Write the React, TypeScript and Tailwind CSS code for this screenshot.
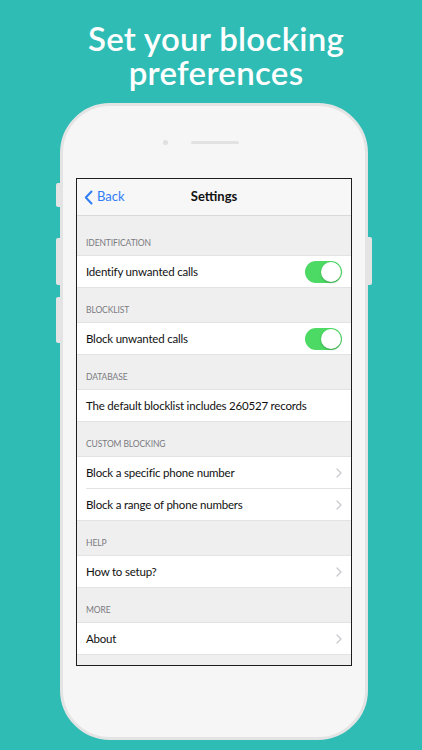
import React from 'react';

type Row = { label: string; kind: 'toggle' | 'link' | 'text' };
type Section = { title: string; rows: Row[] };

const sections: Section[] = [
  { title: 'IDENTIFICATION', rows: [{ label: 'Identify unwanted calls', kind: 'toggle' }] },
  { title: 'BLOCKLIST', rows: [{ label: 'Block unwanted calls', kind: 'toggle' }] },
  { title: 'DATABASE', rows: [{ label: 'The default blocklist includes 260527 records', kind: 'text' }] },
  {
    title: 'CUSTOM BLOCKING',
    rows: [
      { label: 'Block a specific phone number', kind: 'link' },
      { label: 'Block a range of phone numbers', kind: 'link' },
    ],
  },
  { title: 'HELP', rows: [{ label: 'How to setup?', kind: 'link' }] },
  { title: 'MORE', rows: [{ label: 'About', kind: 'link' }] },
];

const Toggle = () => (
  <div className="w-[37px] h-[22px] rounded-full bg-[#4cd964] relative">
    <div className="absolute right-[1px] top-[1px] w-[20px] h-[20px] rounded-full bg-white shadow-[0_1px_2px_rgba(0,0,0,0.25)]" />
  </div>
);

const Chevron = () => (
  <svg width="6" height="10" viewBox="0 0 6 10" fill="none">
    <path d="M1 1l4 4-4 4" stroke="#c7c7cc" strokeWidth="1.2" strokeLinecap="round" strokeLinejoin="round" />
  </svg>
);

const SettingsRow = ({ row, last }: { row: Row; last: boolean }) => (
  <div className="h-[32px] bg-white flex items-center pl-[9px] pr-[9px] relative">
    <span className="flex-1 text-[11.5px] text-[#111] tracking-[-0.2px]">{row.label}</span>
    {row.kind === 'toggle' && <Toggle />}
    {row.kind === 'link' && <Chevron />}
    <div className={`absolute right-0 bottom-0 h-px bg-[#e3e3e3] ${last ? 'left-0' : 'left-[9px]'}`} />
  </div>
);

export default function App() {
  return (
    <div className="w-[422px] h-[750px] overflow-hidden bg-[#2fbcb5] flex flex-col">
      <h1 className="pt-[21px] pl-[10px] text-center text-white text-[33px] leading-[34px] font-semibold font-['Lato',sans-serif] tracking-[0.3px]">
        Set your blocking
        <br />
        preferences
      </h1>

      <div className="relative mt-[14px] ml-[60px] w-[308px] h-[637px] shrink-0 rounded-[50px] bg-[#f6f6f6] border-[3px] border-[#e4e4e4]">
        {/* side buttons */}
        <div className="absolute left-[-7px] top-[77px] w-[4px] h-[24px] rounded-l-[2px] bg-[#e4e4e4]" />
        <div className="absolute left-[-7px] top-[132px] w-[4px] h-[47px] rounded-l-[2px] bg-[#e4e4e4]" />
        <div className="absolute left-[-7px] top-[191px] w-[4px] h-[46px] rounded-l-[2px] bg-[#e4e4e4]" />
        <div className="absolute right-[-7px] top-[131px] w-[4px] h-[48px] rounded-r-[2px] bg-[#e4e4e4]" />

        {/* camera + speaker */}
        <div className="flex items-center justify-center gap-[23px] pt-[34px] pr-[27px]">
          <div className="w-[5px] h-[5px] rounded-full bg-[#e0e0e0]" />
          <div className="w-[48px] h-[3px] rounded-full bg-[#e2e2e2]" />
        </div>

        {/* screen */}
        <div className="mt-[33px] mx-[13px] h-[488px] border-[1.5px] border-[#1e1e1e] bg-[#efeff0] overflow-hidden font-['Lato',sans-serif]">
          <div className="h-[37px] bg-[#f7f7f7] border-b border-[#d9d9d9] flex items-center relative">
            <div className="flex items-center pl-[7px] gap-[4px] text-[#2f7cf6]">
              <svg width="9" height="15" viewBox="0 0 9 15" fill="none">
                <path d="M7.5 1.5L1.8 7.5l5.7 6" stroke="#2f7cf6" strokeWidth="2" strokeLinecap="round" strokeLinejoin="round" />
              </svg>
              <span className="text-[13px]">Back</span>
            </div>
            <span className="absolute left-0 right-0 text-center text-[13px] font-bold text-[#111] pointer-events-none">
              Settings
            </span>
          </div>

          <div className="pt-[5px]">
            {sections.map((s) => (
              <div key={s.title}>
                <div className="h-[34px] flex items-end pl-[9px] pb-[5px] text-[8.5px] text-[#7a7a7e] tracking-[-0.1px]">
                  {s.title}
                </div>
                <div className="border-t border-[#e3e3e3]">
                  {s.rows.map((r, i) => (
                    <SettingsRow key={r.label} row={r} last={i === s.rows.length - 1} />
                  ))}
                </div>
              </div>
            ))}
          </div>
        </div>
      </div>
    </div>
  );
}
